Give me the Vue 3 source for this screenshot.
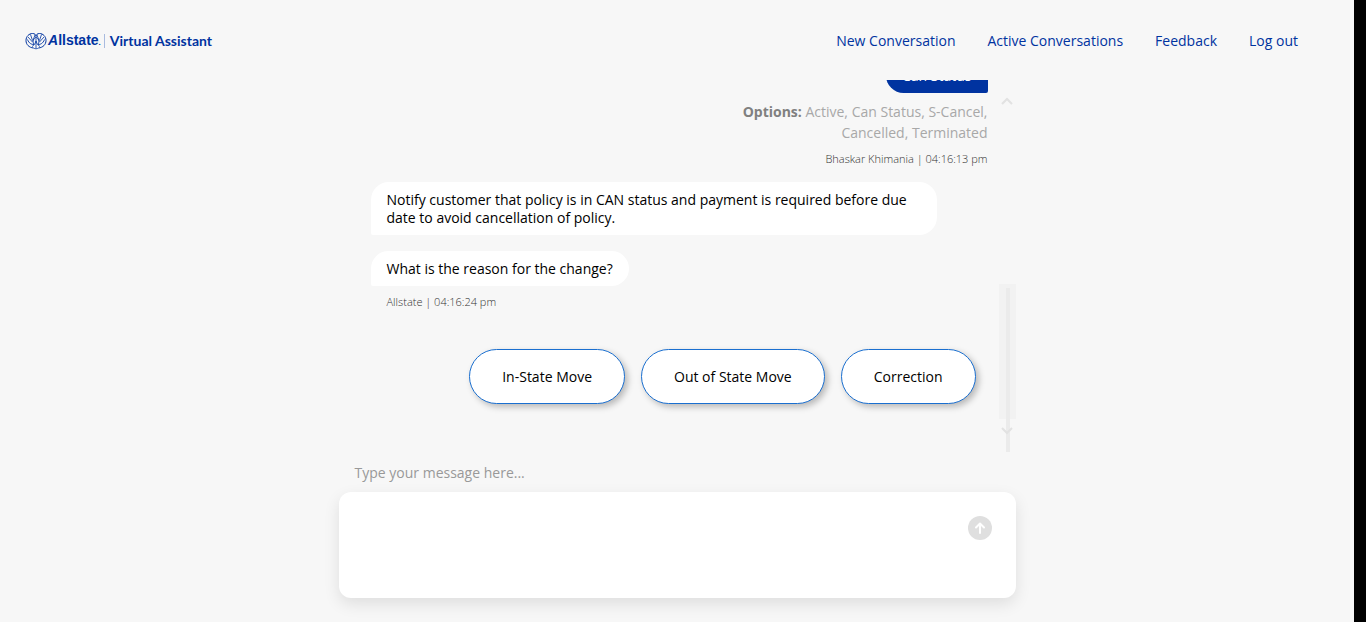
<script setup>
import { ref } from 'vue'

const links = ['New Conversation', 'Active Conversations', 'Feedback', 'Log out']
const replies = ['In-State Move', 'Out of State Move', 'Correction']
const draft = ref('')
</script>

<template>
  <div class="page">
    <header class="header">
      <a class="brand" href="#" aria-label="Allstate Virtual Assistant">
        <svg class="mark" viewBox="0 0 44 36" fill="none" stroke="#0033a0" stroke-width="2" aria-hidden="true">
          <path d="M17 32C8 31 2 25 2 17C2 9 8 3 15 3C19 3 22 5 22 9C22 5 25 3 29 3C36 3 42 9 42 17C42 25 36 31 27 32" />
          <path d="M11 5L15 17M6 10L15 20M20 6L16 17M33 5L29 17M38 10L29 20M24 6L28 17" stroke-width="1.6" />
          <path d="M5 15C8 23 13 25 18 25C14 18 17 14 22 10C27 14 30 18 26 25C31 25 36 23 39 15" stroke-width="1.8" />
          <path d="M14 29C18 27 20 24 22 18C24 24 26 27 30 29M17 32C20 34 24 34 27 32M22 12V32" stroke-width="1.6" />
        </svg>
        <span class="name"><em>A</em>llstate<small>.</small></span>
        <span class="rule"></span>
        <span class="product">Virtual Assistant</span>
      </a>
      <nav class="nav">
        <a v-for="link in links" :key="link" href="#">{{ link }}</a>
      </nav>
    </header>

    <main class="chat">
      <section class="log" aria-label="Conversation">
        <div class="messages">
          <div class="group sent">
            <p class="bubble own">Can Status</p>
            <p class="options"><strong>Options:</strong> Active, Can Status, S-Cancel, Cancelled, Terminated</p>
            <p class="meta">Bhaskar Khimania | 04:16:13 pm</p>
          </div>
          <div class="group received">
            <p class="bubble">Notify customer that policy is in CAN status and payment is required before due date to avoid cancellation of policy.</p>
            <p class="bubble">What is the reason for the change?</p>
            <p class="meta">Allstate | 04:16:24 pm</p>
          </div>
          <div class="replies">
            <button v-for="reply in replies" :key="reply" type="button">{{ reply }}</button>
          </div>
        </div>
        <div class="rail" aria-hidden="true">
          <svg class="up" viewBox="0 0 12 8"><path d="M1 7L6 2L11 7" /></svg>
          <div class="thumb"></div>
          <div class="line"></div>
          <svg class="down" viewBox="0 0 12 8"><path d="M1 1L6 6L11 1" /></svg>
        </div>
      </section>

      <form class="composer" @submit.prevent>
        <label for="message">Type your message here...</label>
        <div class="field">
          <textarea id="message" v-model="draft"></textarea>
          <button type="submit" aria-label="Send">
            <svg viewBox="0 0 24 24" fill="none" stroke="#fff" stroke-width="2" stroke-linecap="round" stroke-linejoin="round" aria-hidden="true">
              <path d="M12 17V8M8 11.5L12 7.5L16 11.5" />
            </svg>
          </button>
        </div>
      </form>
    </main>
  </div>
</template>

<style>
body {
  background: #000;
}
</style>

<style scoped>
.page {
  display: flex;
  flex-direction: column;
  height: 100vh;
  margin-right: 12px;
  background: #f7f7f7;
  color: #000;
  font: 14px/18px "Open Sans", "Noto Sans", sans-serif;
}
p {
  margin: 0;
}
.header {
  box-sizing: border-box;
  display: flex;
  flex: none;
  align-items: center;
  justify-content: space-between;
  height: 80px;
  padding: 2px 56px 0 25px;
}
.brand {
  display: flex;
  align-items: center;
  color: #0033a0;
  text-decoration: none;
  white-space: nowrap;
}
.mark {
  width: 22px;
  height: 18px;
}
.name {
  margin-left: 1px;
  font: 700 14px/18px "Liberation Sans", Arial, sans-serif;
}
.name em {
  font-style: italic;
}
.name small {
  font-size: 8px;
}
.rule {
  width: 1px;
  height: 14px;
  margin: 0 5px 0 3px;
  background: #a9bbdf;
}
.product {
  font: 700 14px/18px Lato, sans-serif;
}
.nav {
  display: flex;
  gap: 32px;
  white-space: nowrap;
}
.nav a {
  color: #0033a0;
  text-decoration: none;
}
.chat {
  display: flex;
  flex: 1;
  flex-direction: column;
  width: 50%;
  min-height: 0;
  margin: 0 auto;
}
.log {
  display: flex;
  flex: 1;
  min-height: 0;
  overflow: hidden;
}
.messages {
  display: flex;
  flex: 1;
  flex-direction: column;
  justify-content: flex-end;
  padding: 0 11px 48px 32px;
}
.group {
  display: flex;
  flex: none;
  flex-direction: column;
}
.sent {
  align-items: flex-end;
  text-align: right;
}
.received {
  align-items: flex-start;
  margin: 15px 0 39px;
}
.bubble {
  max-width: 534px;
  padding: 9px 16px 8px;
  border-radius: 18px 18px 18px 2px;
  background: #fff;
}
.bubble + .bubble {
  margin-top: 16px;
}
.own {
  border-radius: 18px 18px 2px 18px;
  background: #0033a0;
  color: #fff;
}
.options {
  max-width: 260px;
  margin-top: 8px;
  color: #a8a8a8;
  line-height: 21px;
}
.options strong {
  color: #808080;
}
.meta {
  margin-top: 7px;
  color: #333;
  font-size: 11px;
  font-weight: 300;
  line-height: 17px;
}
.received .meta {
  padding-left: 16px;
}
.replies {
  display: flex;
  flex: none;
  justify-content: flex-end;
  gap: 16px;
  padding-right: 12px;
}
.replies button {
  height: 55px;
  padding: 0 32px;
  border: 1px solid #1a6fd0;
  border-radius: 28px;
  background: #fff;
  box-shadow: 3px 3px 6px rgba(0, 0, 0, 0.25);
  color: #000;
  font: inherit;
  white-space: nowrap;
}
.rail {
  display: grid;
  flex: none;
  grid-template-rows: 204px 4px 131px 33px;
  grid-template-columns: 7px 4px 6px;
  align-content: start;
}
.rail svg {
  grid-column: 1 / -1;
  width: 12px;
  height: 8px;
  margin-left: 2px;
  fill: none;
  stroke: #e2e2e2;
  stroke-width: 2;
}
.rail .up {
  grid-row: 1;
  margin-top: 17px;
}
.rail .down {
  grid-row: 4;
  margin-top: 8px;
}
.thumb {
  grid-row: 2 / 4;
  grid-column: 1 / -1;
  background: #f2f2f2;
}
.line {
  grid-row: 3 / 5;
  grid-column: 2;
  background: #ebebeb;
}
.composer {
  flex: none;
  padding: 12px 0 24px;
}
.composer label {
  display: block;
  padding: 0 16px 10px;
  color: #999;
}
.field {
  display: flex;
  align-items: flex-start;
  height: 106px;
  border-radius: 12px;
  background: #fff;
  box-shadow: 0 6px 16px rgba(0, 0, 0, 0.1);
}
.field textarea {
  flex: 1;
  align-self: stretch;
  min-width: 0;
  padding: 16px;
  border: 0;
  outline: 0;
  background: transparent;
  font: inherit;
  resize: none;
}
.field button {
  width: 24px;
  height: 24px;
  margin: 24px 24px 0 0;
  padding: 0;
  border: 0;
  border-radius: 50%;
  background: #dfdfdf;
}
.field svg {
  display: block;
}
</style>
